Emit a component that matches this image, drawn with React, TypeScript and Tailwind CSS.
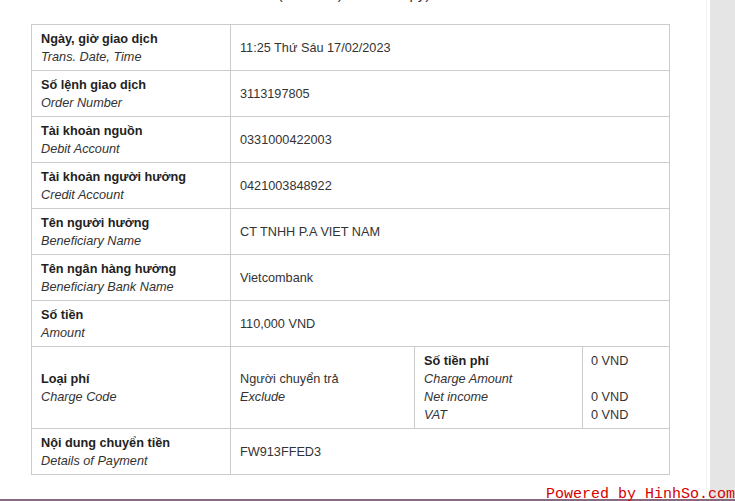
import React from "react";

const font = { fontFamily: '"Liberation Sans", Arial, sans-serif' };

function Row({
  label,
  sub,
  value,
  first,
}: {
  label: string;
  sub: string;
  value: string;
  first?: boolean;
}) {
  return (
    <div className={first ? "flex h-[45px]" : "flex h-[46px] border-t border-[#cccccc]"}>
      <div className="flex w-[199px] shrink-0 flex-col justify-center border-r border-[#cccccc] pl-[9px]">
        <div className="text-[12.7px] font-bold leading-[18px] text-[#222]">{label}</div>
        <div className="text-[12.7px] italic leading-[18px] text-[#333]">{sub}</div>
      </div>
      <div className="flex flex-1 items-center pl-[9px] text-[12.7px] leading-[18px] text-[#333]">{value}</div>
    </div>
  );
}

export default function App() {
  const rows = [
    ["Ngày, giờ giao dịch", "Trans. Date, Time", "11:25 Thứ Sáu 17/02/2023"],
    ["Số lệnh giao dịch", "Order Number", "3113197805"],
    ["Tài khoản nguồn", "Debit Account", "0331000422003"],
    ["Tài khoản người hưởng", "Credit Account", "0421003848922"],
    ["Tên người hưởng", "Beneficiary Name", "CT TNHH P.A VIET NAM"],
    ["Tên ngân hàng hưởng", "Beneficiary Bank Name", "Vietcombank"],
    ["Số tiền", "Amount", "110,000 VND"],
  ];
  return (
    <div className="relative flex h-[501px] w-[735px] overflow-hidden bg-white" style={font}>
      <div className="flex w-[707px] shrink-0 flex-col border-r border-[#f3f3f3] bg-white">
        <div className="-mt-[15px] h-[18px] text-center text-[15px] leading-[18px] text-[#333]">
          <span className="ml-[2px]">(Bản sao)</span> <span>Bản in copy)</span>
        </div>
        <div className="ml-[31px] mt-[21px] w-[639px] border border-[#cccccc]">
          {rows.map((r, i) => (
            <Row key={i} label={r[0]} sub={r[1]} value={r[2]} first={i === 0} />
          ))}
          <div className="flex h-[82px] border-t border-[#cccccc]">
            <div className="flex w-[199px] shrink-0 flex-col justify-center border-r border-[#cccccc] pl-[9px]">
              <div className="text-[12.7px] font-bold leading-[18px] text-[#222]">Loại phí</div>
              <div className="text-[12.7px] italic leading-[18px] text-[#333]">Charge Code</div>
            </div>
            <div className="flex w-[184px] shrink-0 flex-col justify-center border-r border-[#cccccc] pl-[9px] text-[12.7px] leading-[18px] text-[#333]">
              <div>Người chuyển trả</div>
              <div className="italic">Exclude</div>
            </div>
            <div className="flex w-[168px] shrink-0 flex-col justify-center border-r border-[#cccccc] pl-[9px] text-[12.7px] leading-[18px] text-[#333]">
              <div className="font-bold text-[#222]">Số tiền phí</div>
              <div className="italic">Charge Amount</div>
              <div className="italic">Net income</div>
              <div className="italic">VAT</div>
            </div>
            <div className="flex flex-1 flex-col justify-center pl-[8px] text-[12.7px] leading-[18px] text-[#333]">
              <div>0 VND</div>
              <div>&nbsp;</div>
              <div>0 VND</div>
              <div>0 VND</div>
            </div>
          </div>
          <div className="flex h-[46px] border-t border-[#cccccc]">
            <div className="flex w-[199px] shrink-0 flex-col justify-center border-r border-[#cccccc] pl-[9px]">
              <div className="text-[12.7px] font-bold leading-[18px] text-[#222]">Nội dung chuyển tiền</div>
              <div className="text-[12.7px] italic leading-[18px] text-[#333]">Details of Payment</div>
            </div>
            <div className="flex flex-1 items-center pl-[9px] text-[12.7px] leading-[18px] text-[#333]">FW913FFED3</div>
          </div>
        </div>
      </div>
      <div className="flex-1 border-l-[3px] border-white bg-[#e5e5e5]" />
      <div className="absolute bottom-0 left-0 h-[2px] w-full bg-[#876a7f]" />
      <div
        className="absolute bottom-[-1px] right-0 text-[15px] leading-[14px] text-[#d40000]"
        style={{ fontFamily: '"Liberation Mono", "DejaVu Sans Mono", monospace' }}
      >
        Powered by HinhSo.com
      </div>
    </div>
  );
}
